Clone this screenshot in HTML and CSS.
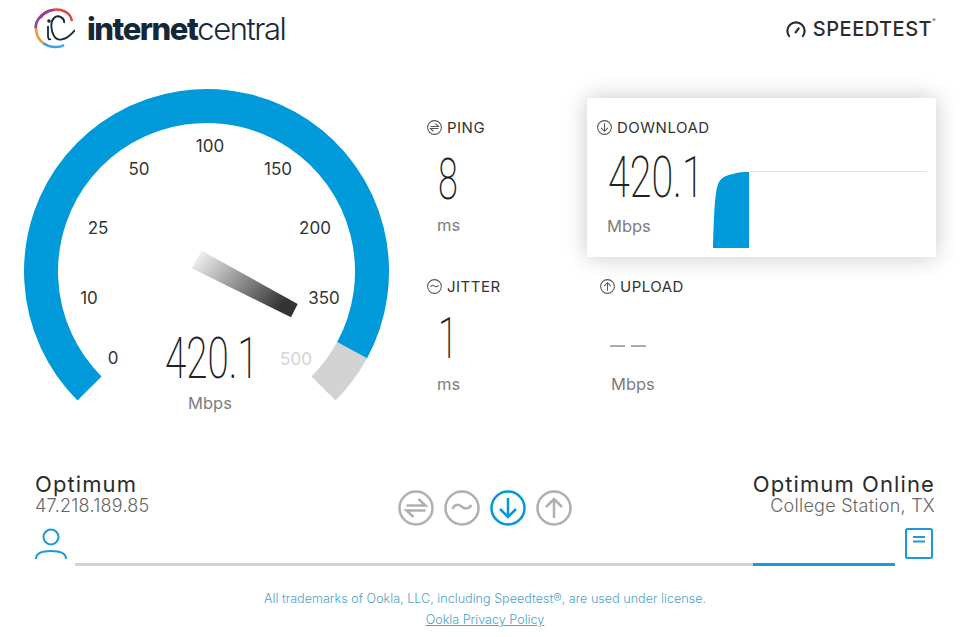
FILE: index.html
```html
<!DOCTYPE html>
<html lang="en">
  <head>
    <meta charset="UTF-8" />
    <title>Speedtest - internetcentral</title>
    <link rel="stylesheet" href="styles.css">
  </head>
  <body>
    <svg class="icon-defs" width="0" height="0">
      <symbol id="i-ping" viewBox="0 0 36 36">
        <circle cx="18" cy="18" r="16.5" />
        <path d="M8.500 15.500h19l-7-6.500M27.500 20.500h-19l7 6.500" />
      </symbol>
      <symbol id="i-jitter" viewBox="0 0 36 36">
        <circle cx="18" cy="18" r="16.5" />
        <path d="M8.500 19c2-5 6-5 9-2.500s7 3 10-1.500" />
      </symbol>
      <symbol id="i-down" viewBox="0 0 36 36">
        <circle cx="18" cy="18" r="16.5" />
        <path d="M18 8v19M10 19l8 8 8-8" />
      </symbol>
      <symbol id="i-up" viewBox="0 0 36 36">
        <circle cx="18" cy="18" r="16.5" />
        <path d="M18 28V9M10 17l8-8 8 8" />
      </symbol>
    </svg>

    <header class="top-bar">
      <div class="brand">
        <svg class="brand-mark" viewBox="0 0 42 42" width="42" height="42">
          <path class="swirl" stroke="#e8413c" d="M7 11C11 5 20 1 28 3s10 6 11 11" />
          <path class="swirl" stroke="#8b3fa0" d="M3 22C2 17 4 13 8 9s9-6 13-6" />
          <path class="swirl" stroke="#f29a38" d="M10 36C5 32 3 27 3 21" />
          <path class="swirl" stroke="#3fa2dc" d="M10 36c7 5 16 5 21 2" />
          <path class="swirl-dark" d="M15 19v10c0 3 1 4 3 3" />
          <path class="swirl-dark" d="M31 16c1-5-6-9-10-5s-3 13 0 18 11 6 21-6" />
          <circle cx="16" cy="14" r="1.800" fill="#14283a" />
        </svg>
        <span class="brand-name"><b>internet</b>central</span>
      </div>
      <div class="ookla">
        <svg class="ookla-mark" viewBox="0 0 22 20" width="20" height="19">
          <path d="M4 18a9.500 9.500 0 1 1 14 0M10 14l4.500-6" />
        </svg>
        <span>SPEEDTEST</span><sup>®</sup>
      </div>
    </header>

    <main class="results">
      <svg class="gauge" viewBox="0 0 412 350" width="412" height="350">
        <defs>
          <linearGradient id="needle" x1="0" y1="0" x2="1" y2="0.55">
            <stop offset="0" stop-color="#333" stop-opacity="0" />
            <stop offset="1" stop-color="#333" />
          </linearGradient>
        </defs>
        <path class="arc-rest" d="M352.100 276.200A165.500 165.500 0 0 1 323.500 314.500" />
        <path class="arc-fill" d="M89.500 314.500A165.500 165.500 0 1 1 352.100 276.200" />
        <polygon fill="url(#needle)" points="201.700,176.700 297.700,230 291,243.300 191.700,194.300" />
        <text class="tick" x="210" y="73">100</text>
        <text class="tick" x="139" y="96">50</text>
        <text class="tick" x="278" y="96">150</text>
        <text class="tick" x="98" y="155">25</text>
        <text class="tick" x="315" y="155">200</text>
        <text class="tick" x="89" y="225">10</text>
        <text class="tick" x="324" y="225">350</text>
        <text class="tick" x="113" y="285">0</text>
        <text class="tick tick-rest" x="296" y="286">500</text>
        <text class="gauge-value" transform="translate(165 304) scale(0.665 1)">420.1</text>
        <text class="gauge-unit" x="210" y="335">Mbps</text>
      </svg>

      <section class="stats">
        <div class="stat stat-ping">
          <h2 class="stat-label"><svg class="stat-icon"><use href="#i-ping" /></svg>PING</h2>
          <div class="stat-value value-one">8</div>
          <div class="stat-unit">ms</div>
        </div>
        <div class="stat stat-download">
          <h2 class="stat-label"><svg class="stat-icon"><use href="#i-down" /></svg>DOWNLOAD</h2>
          <div class="download-body">
            <div class="download-reading">
              <div class="stat-value value-long">420.1</div>
              <div class="stat-unit">Mbps</div>
            </div>
            <svg class="graph" viewBox="0 0 214 78" width="214" height="78">
              <path class="graph-line" d="M36 .5H214" />
              <path class="graph-area" d="M0 77C1 40 2 18 6 11 9 6 14 4 20 3 26 1 30 1 36 1V77Z" />
            </svg>
          </div>
        </div>
        <div class="stat stat-jitter">
          <h2 class="stat-label"><svg class="stat-icon"><use href="#i-jitter" /></svg>JITTER</h2>
          <div class="stat-value value-one">1</div>
          <div class="stat-unit">ms</div>
        </div>
        <div class="stat stat-upload">
          <h2 class="stat-label"><svg class="stat-icon"><use href="#i-up" /></svg>UPLOAD</h2>
          <div class="upload-dashes"><i></i><i></i></div>
          <div class="stat-unit">Mbps</div>
        </div>
      </section>
    </main>

    <section class="connection">
      <div class="connection-row">
        <div class="endpoint">
          <div class="endpoint-name">Optimum</div>
          <div class="endpoint-detail">47.218.189.85</div>
        </div>
        <div class="phases">
          <svg class="phase"><use href="#i-ping" /></svg>
          <svg class="phase"><use href="#i-jitter" /></svg>
          <svg class="phase phase-active"><use href="#i-down" /></svg>
          <svg class="phase"><use href="#i-up" /></svg>
        </div>
        <div class="endpoint endpoint-right">
          <div class="endpoint-name">Optimum Online</div>
          <div class="endpoint-detail">College Station, TX</div>
        </div>
      </div>
      <div class="progress-row">
        <svg class="line-icon" viewBox="0 0 32 32" width="32" height="32">
          <circle cx="16" cy="9" r="7.500" />
          <path d="M1 31c0-6 7-8 15-8s15 2 15 8" />
        </svg>
        <div class="progress"><div class="progress-done"></div></div>
        <svg class="line-icon" viewBox="0 0 28 31" width="28" height="31">
          <rect x="1" y="1" width="26" height="29" rx="1.500" />
          <path d="M8 9h12M8 13.500h12" />
        </svg>
      </div>
    </section>

    <footer class="legal">
      <p>All trademarks of Ookla, LLC, including Speedtest®, are used under license.</p>
      <a href="#">Ookla Privacy Policy</a>
    </footer>
  </body>
</html>
```

FILE: styles.css
```css
:root {
  --blue: #0099d9;
  --rest: #d3d3d3;
  --ink: #2c2c2c;
  --muted: #7d7d7d;
}
html {
  font-size: 16px;
}
body {
  width: 966px;
  height: 637px;
  margin: 0;
  overflow: hidden;
  background: #fff;
  color: var(--ink);
  font-family: Inter, "Open Sans", sans-serif;
}
.icon-defs {
  position: absolute;
}
symbol circle,
symbol path {
  fill: none;
  stroke: currentColor;
  stroke-width: 2.500;
}

/* header */
.top-bar {
  display: flex;
  justify-content: space-between;
  align-items: flex-start;
  padding: 7px 30px 0 33px;
  height: 66px;
  box-sizing: border-box;
}
.brand {
  display: flex;
  align-items: center;
  gap: 12px;
}
.swirl {
  fill: none;
  stroke-width: 2.600;
}
.swirl-dark {
  fill: none;
  stroke: #14283a;
  stroke-width: 1.800;
}
.brand-name {
  font-size: 31px;
  font-weight: 300;
  letter-spacing: -1.450px;
  color: #14283a;
}
.brand-name b {
  font-weight: 800;
}
.ookla {
  display: flex;
  align-items: center;
  gap: 7px;
  margin-top: 10px;
  font-size: 20px;
  font-weight: 500;
  letter-spacing: 0.500px;
}
.ookla-mark {
  fill: none;
  stroke: var(--ink);
  stroke-width: 2.400;
}
.ookla sup {
  margin-left: -7px;
  font-size: 5px;
  align-self: flex-start;
}

/* gauge and stat blocks */
.results {
  display: flex;
  height: 400px;
}
.gauge {
  flex: none;
  margin-top: 8px;
}
.arc-fill,
.arc-rest {
  fill: none;
  stroke-width: 34;
}
.arc-fill {
  stroke: var(--blue);
}
.arc-rest {
  stroke: var(--rest);
}
.tick {
  font-size: 17px;
  fill: #333;
  text-anchor: middle;
  dominant-baseline: middle;
}
.tick-rest {
  fill: var(--rest);
}
.gauge-value {
  font-family: Roboto, sans-serif;
  font-weight: 200;
  font-size: 58px;
  fill: #222;
}
.gauge-unit {
  font-size: 16.500px;
  fill: var(--muted);
  text-anchor: middle;
}
.stats {
  display: grid;
  grid-template-columns: 160px 349px;
  grid-template-rows: 172px 120px;
  margin: 32px 0 0 15px;
}
.stat-label {
  display: flex;
  align-items: center;
  gap: 5px;
  margin: 0;
  font-size: 15px;
  font-weight: 400;
  letter-spacing: 0.500px;
  height: 16px;
  color: #333;
}
.stat-icon {
  width: 15px;
  height: 15px;
  color: #555;
}
.stat-unit {
  font-size: 16.500px;
  color: var(--muted);
}
.stat-value {
  font-family: Roboto, sans-serif;
  font-weight: 200;
  font-size: 58px;
  line-height: 58px;
  color: #222;
  transform-origin: left center;
  transform: scaleX(0.62);
  white-space: nowrap;
}
.stat-ping {
  padding-top: 21px;
}
.stat-jitter {
  padding-top: 8px;
}
.value-one {
  margin: 15px 0 7px 11px;
}
.stat-ping .stat-unit,
.stat-jitter .stat-unit {
  margin-left: 10px;
}
.stat-download {
  height: 159px;
  padding: 21px 10px 0;
  box-sizing: border-box;
  background: #fff;
  box-shadow: 0 0 22px rgba(0, 0, 0, 0.22);
}
.download-body {
  display: flex;
  align-items: flex-start;
  margin-top: 13px;
}
.download-reading {
  flex: none;
  width: 116px;
}
.download-reading .stat-value {
  margin-left: 11px;
  height: 58px;
  transform: scaleX(0.68);
}
.download-reading .stat-unit {
  margin: 10px 0 0 10px;
}
.graph {
  margin-top: 23px;
  flex: none;
}
.graph-line {
  fill: none;
  stroke: #e4e4e4;
}
.graph-area {
  fill: var(--blue);
}
.stat-upload {
  padding: 8px 0 0 13px;
}
.upload-dashes {
  display: flex;
  gap: 6px;
  height: 80px;
  margin-left: 10px;
  padding-top: 51px;
  box-sizing: border-box;
}
.upload-dashes i {
  width: 15px;
  height: 1.500px;
  background: #aaa;
}
.stat-upload .stat-unit {
  margin-left: 11px;
}

/* isp, server and progress */
.connection {
  margin: 6px 33px 0 35px;
}
.connection-row {
  display: flex;
  justify-content: space-between;
  align-items: flex-start;
}
.endpoint {
  width: 260px;
}
.endpoint-right {
  margin-right: -2px;
  text-align: right;
}
.endpoint-name {
  font-size: 22px;
  line-height: 24px;
  letter-spacing: 1.100px;
  color: #2b2b2b;
}
.endpoint-detail {
  font-size: 18px;
  line-height: 20px;
  font-weight: 300;
  letter-spacing: 0.250px;
  color: #666;
}
.phases {
  display: flex;
  gap: 10px;
  padding-top: 18px;
  margin-right: 1px;
}
.phase {
  width: 36px;
  height: 36px;
  color: #b0b0b0;
}
.phase-active {
  color: var(--blue);
}
.progress-row {
  display: flex;
  align-items: flex-start;
  margin-top: 2px;
}
.line-icon {
  flex: none;
  fill: none;
  stroke: #1a9ad6;
  stroke-width: 2;
}
.progress {
  flex: 1;
  height: 3px;
  margin: 35px 10px 0 8px;
  background: var(--rest);
  display: flex;
  justify-content: flex-end;
}
.progress-done {
  width: 142px;
  background: #1a9ad6;
}

/* legal */
.legal {
  margin-top: 26px;
  padding-left: 4px;
  text-align: center;
  font-size: 12.600px;
  font-weight: 300;
  color: #4aa3c8;
}
.legal p {
  margin: 0 0 6px;
  line-height: 14px;
}
.legal a {
  color: #4aa3c8;
  line-height: 14px;
}
```
